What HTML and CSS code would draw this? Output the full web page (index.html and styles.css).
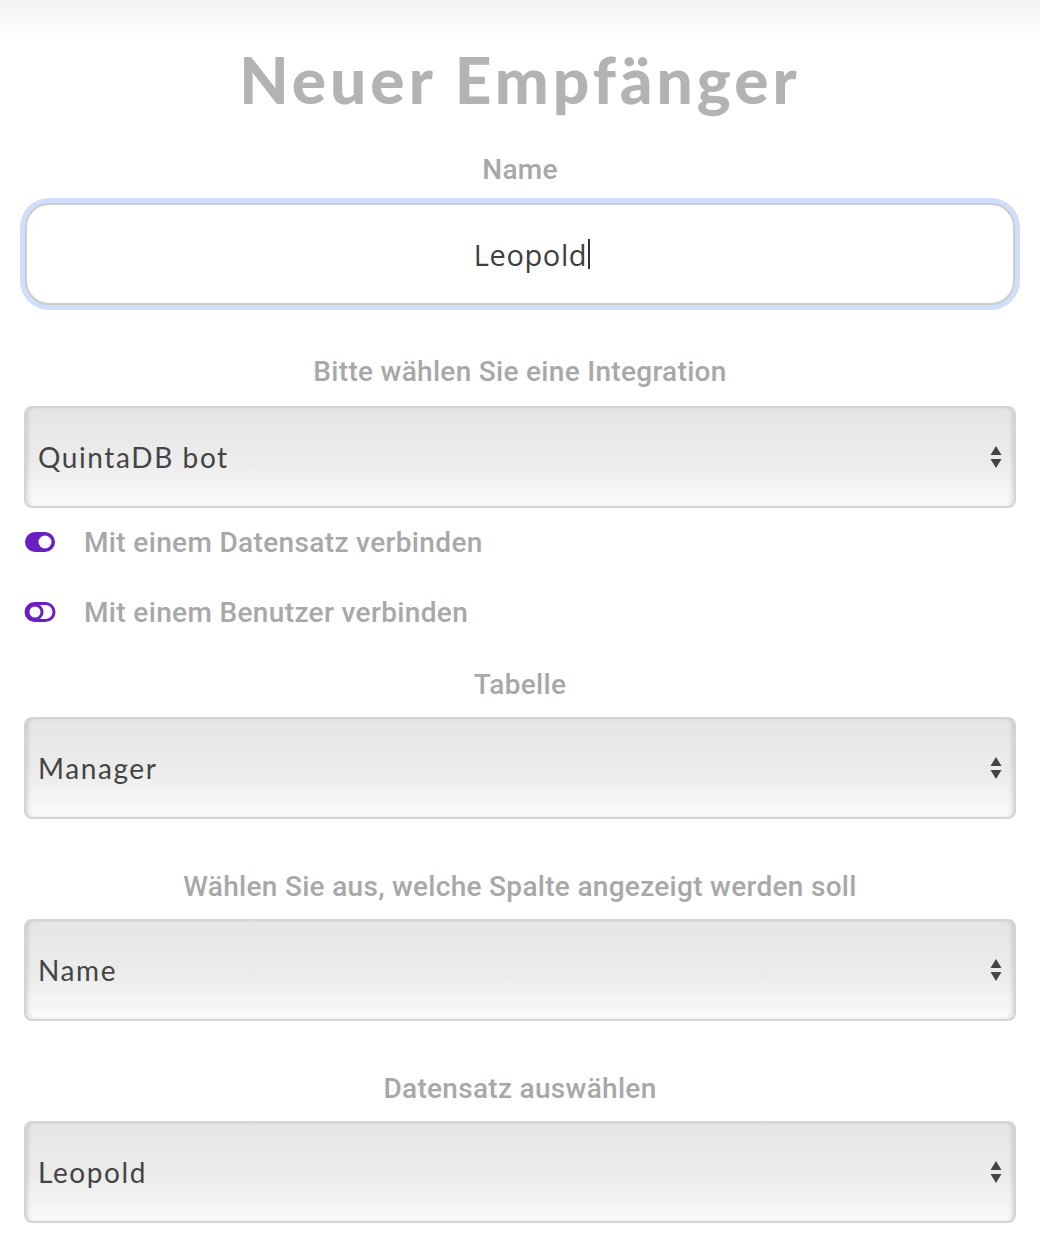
FILE: index.html
```html
<html>
<head>
	<title>Neuer Empfänger</title>
	<link rel="stylesheet" href="styles.css">
</head>
<body>
	<div class="page">
		<h1 class="title">Neuer Empfänger</h1>

		<div class="label label-first">Name</div>
		<div class="name-input"><span class="name-value">Leopold</span><span class="caret"></span></div>

		<div class="label label-wide">Bitte wählen Sie eine Integration</div>
		<div class="select">
			<span>QuintaDB bot</span>
			<svg class="arrows" width="12" height="24" viewBox="0 0 12 24"><path d="M6 1 L11.5 10 L0.5 10 Z" fill="#444"/><path d="M0.5 14 L11.5 14 L6 23 Z" fill="#444"/></svg>
		</div>

		<div class="switch-row switch-first">
			<svg class="switch" width="32" height="22" viewBox="0 0 32 22"><rect x="1" y="1" width="30" height="20" rx="10" fill="#6a1fc4"/><circle cx="21" cy="11" r="6.5" fill="#fff"/></svg>
			<span>Mit einem Datensatz verbinden</span>
		</div>
		<div class="switch-row">
			<svg class="switch" width="32" height="22" viewBox="0 0 32 22"><rect x="2" y="2.5" width="28" height="17" rx="8.5" fill="none" stroke="#6a1fc4" stroke-width="3"/><circle cx="11" cy="11" r="7" fill="#fff" stroke="#6a1fc4" stroke-width="3"/></svg>
			<span>Mit einem Benutzer verbinden</span>
		</div>

		<div class="label label-after-switch">Tabelle</div>
		<div class="select">
			<span>Manager</span>
			<svg class="arrows" width="12" height="24" viewBox="0 0 12 24"><path d="M6 1 L11.5 10 L0.5 10 Z" fill="#444"/><path d="M0.5 14 L11.5 14 L6 23 Z" fill="#444"/></svg>
		</div>

		<div class="label">Wählen Sie aus, welche Spalte angezeigt werden soll</div>
		<div class="select">
			<span>Name</span>
			<svg class="arrows" width="12" height="24" viewBox="0 0 12 24"><path d="M6 1 L11.5 10 L0.5 10 Z" fill="#444"/><path d="M0.5 14 L11.5 14 L6 23 Z" fill="#444"/></svg>
		</div>

		<div class="label">Datensatz auswählen</div>
		<div class="select">
			<span>Leopold</span>
			<svg class="arrows" width="12" height="24" viewBox="0 0 12 24"><path d="M6 1 L11.5 10 L0.5 10 Z" fill="#444"/><path d="M0.5 14 L11.5 14 L6 23 Z" fill="#444"/></svg>
		</div>
	</div>
</body>
</html>
```

FILE: styles.css
```css
body{
	margin: 0;
	background: linear-gradient(#f4f4f4, #fff 42px) no-repeat;
	font-family: 'Roboto', 'Liberation Sans', sans-serif;
}

.page{
	padding: 0 24px 40px;
}

.title{
	margin: 45px 0 0;
	font-family: 'Lato', sans-serif;
	font-weight: 900;
	font-size: 64px;
	line-height: 70px;
	color: #b3b3b3;
	text-align: center;
	letter-spacing: 4px;
}

.label{
	margin: 53px 0 17px;
	font-size: 28px;
	font-weight: 500;
	line-height: 30px;
	color: #a8a8a8;
	text-align: center;
	letter-spacing: 0.3px;
}

.label-first{
	margin-top: 40px;
	margin-bottom: 18px;
}

.label-wide{
	margin-top: 52px;
	margin-bottom: 19px;
}

.label-after-switch{
	margin-top: 43px;
	margin-bottom: 17px;
}

.name-input{
	display: flex;
	align-items: center;
	justify-content: center;
	height: 102px;
	margin: 0 1px;
	box-sizing: border-box;
	border: 2px solid #cdcdcd;
	border-radius: 24px;
	background: #fff;
	box-shadow: 0 0 0 5px #cfdffb;
	font-family: 'Open Sans', sans-serif;
	font-size: 29px;
	letter-spacing: 0.6px;
	color: #404040;
	padding-left: 24px;
}

.caret{
	display: inline-block;
	width: 2px;
	height: 30px;
	margin-left: 1px;
	background: #333;
}

.select{
	display: flex;
	align-items: center;
	justify-content: space-between;
	height: 102px;
	box-sizing: border-box;
	padding: 0 12px 0 12px;
	border: 2px solid #d4d4d4;
	border-radius: 8px;
	background: linear-gradient(#e5e5e5, #ececec 55%, #fafafa);
	box-shadow: inset 4px 0 4px -2px rgba(0,0,0,0.12), inset -4px 0 4px -2px rgba(0,0,0,0.12);
	font-family: 'Lato', sans-serif;
	font-size: 28px;
	color: #444;
	letter-spacing: 1.6px;
}

.arrows{
	display: block;
}

.switch-row{
	display: flex;
	align-items: center;
	height: 30px;
	margin-top: 40px;
	font-size: 28px;
	font-weight: 500;
	color: #a8a8a8;
	letter-spacing: 0.35px;
}

.switch-first{
	margin-top: 19px;
}

.switch{
	margin-right: 28px;
	flex: none;
}
```
